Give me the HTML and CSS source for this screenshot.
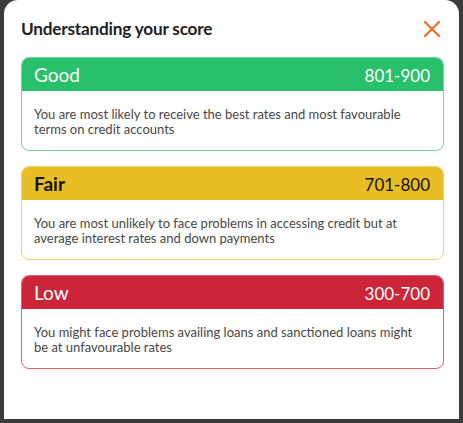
FILE: index.html
```html
<!DOCTYPE html>
<html lang="en">
<head>
    <meta charset="UTF-8">
    <meta name="viewport" content="width=device-width, initial-scale=1.0">
    <title>Understanding your score</title>
    <link rel="stylesheet" href="styles.css">
</head>
<body>
    <div class="modal">
        <!-- Cabecera del modal -->
        <div class="modal-head">
            <h2>Understanding your score</h2>
            <button class="close" aria-label="Close">
                <svg width="18" height="18" viewBox="0 0 18 18">
                    <path d="M2 2 L16 16 M16 2 L2 16" stroke="#f26a2a" stroke-width="2.2" stroke-linecap="round"/>
                </svg>
            </button>
        </div>

        <!-- Rangos de puntuación -->
        <div class="band good">
            <div class="band-head">
                <span class="name">Good</span>
                <span class="range">801-900</span>
            </div>
            <p>You are most likely to receive the best rates and most favourable terms on credit accounts</p>
        </div>

        <div class="band fair">
            <div class="band-head">
                <span class="name">Fair</span>
                <span class="range">701-800</span>
            </div>
            <p>You are most unlikely to face problems in accessing credit but at average interest rates and down payments</p>
        </div>

        <div class="band low">
            <div class="band-head">
                <span class="name">Low</span>
                <span class="range">300-700</span>
            </div>
            <p>You might face problems availing loans and sanctioned loans might be at unfavourable rates</p>
        </div>
    </div>
</body>
</html>
```

FILE: styles.css
```css
html, body {
    height: 100%;
}
body {
    margin: 0;
    font-family: Lato, "Open Sans", sans-serif;
    background-color: #3b3b3b;
    padding: 0 4px 4px 4px;
    box-sizing: border-box;
}
.modal {
    background-color: #ffffff;
    height: 100%;
    border-radius: 14px 14px 0 0;
    padding: 0 15px 0 17px;
    box-sizing: border-box;
}
.modal-head {
    display: flex;
    justify-content: space-between;
    align-items: center;
    height: 57px;
}
.modal-head h2 {
    margin: 0;
    font-size: 17.2px;
    font-weight: 700;
    color: #222222;
    letter-spacing: -0.2px;
}
.close {
    background: none;
    border: none;
    padding: 0;
    margin-right: 3px;
    width: 18px;
    height: 18px;
    cursor: pointer;
}
.band {
    border: 1.5px solid;
    border-radius: 8px;
    overflow: hidden;
    margin-bottom: 15px;
}
.band-head {
    display: flex;
    justify-content: space-between;
    align-items: baseline;
    height: 33px;
    line-height: 33px;
    padding: 0 13px 0 12px;
    color: #ffffff;
}
.band-head .name {
    font-size: 19px;
}
.band-head .range {
    font-size: 17px;
}
.band p {
    margin: 0;
    padding: 16px 26px 13px 12px;
    font-size: 13px;
    line-height: 15px;
    color: #474747;
}
.good {
    border-color: #6fd89a;
}
.good .band-head {
    background-color: #28c06a;
}
.fair {
    border-color: #f0d46a;
}
.fair .band-head {
    background-color: #e9be24;
    color: #15120a;
}
.fair .name {
    font-weight: 700;
}
.low {
    border-color: #e0606e;
}
.low .band-head {
    background-color: #cc2539;
}
```
